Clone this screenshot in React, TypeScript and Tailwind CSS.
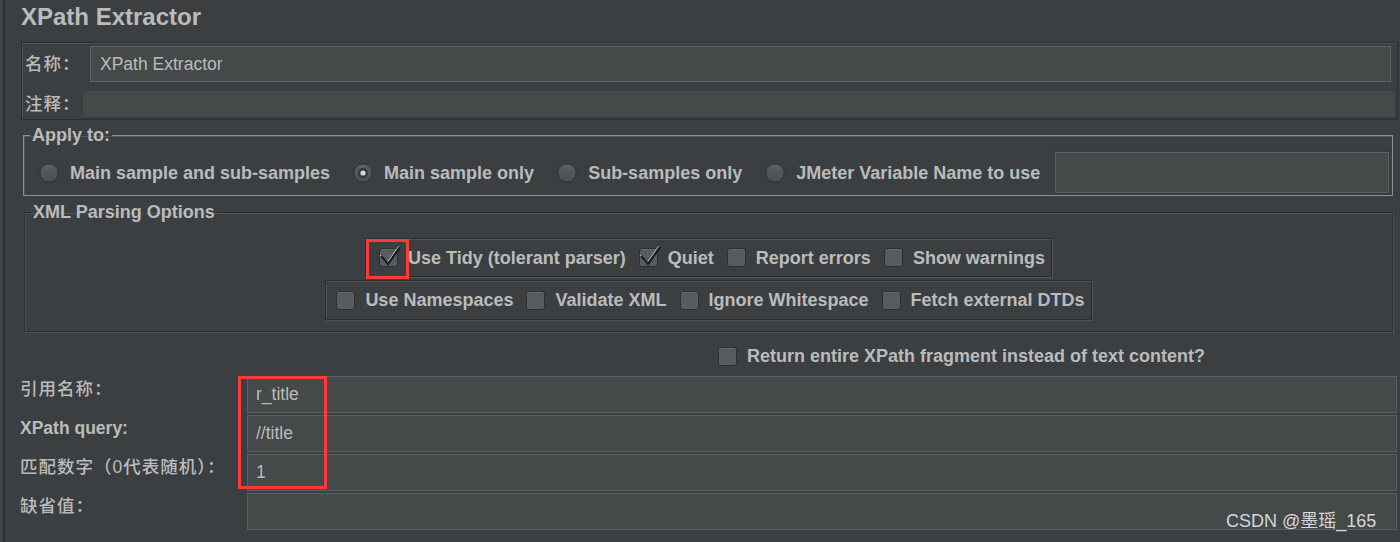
import React from 'react'

const sans = "font-['Liberation_Sans','Noto_Sans_CJK_SC',sans-serif]"

function Radio({ selected }: { selected?: boolean }) {
  return (
    <svg width="20" height="20" viewBox="0 0 20 20" className="shrink-0">
      <defs>
        <linearGradient id="rg" x1="0" y1="0" x2="0" y2="1">
          <stop offset="0" stopColor="#5e6163" />
          <stop offset="1" stopColor="#4a4d4f" />
        </linearGradient>
      </defs>
      <circle cx="10" cy="10" r="9.2" fill="url(#rg)" stroke="#2d2f31" />
      {selected && (
        <>
          <circle cx="10" cy="10" r="5" fill="#35383a" />
          <circle cx="10" cy="10" r="2.6" fill="#d8d8d8" />
        </>
      )}
    </svg>
  )
}

function Check({ checked }: { checked?: boolean }) {
  return (
    <span className="relative block w-[19px] h-[19px] shrink-0 rounded-[3px] border border-[#2d2f31] bg-[#595c5e] shadow-[inset_0_1px_0_#66696b]">
      {checked && (
        <svg className="absolute -left-[2px] -top-[6px]" width="24" height="24" viewBox="0 0 24 24">
          <path d="M3 13 L10 21 L22 4" fill="none" stroke="#d2d2d2" strokeWidth="1.4" transform="translate(-1,-0.6)" />
          <path d="M3 13 L10 21 L22 4" fill="none" stroke="#1b1b1b" strokeWidth="2.2" />
        </svg>
      )}
    </span>
  )
}

function Opt({ label, checked }: { label: string; checked?: boolean }) {
  return (
    <div className="flex items-center gap-[10px]">
      <Check checked={checked} />
      <span className="font-bold text-[18px] whitespace-nowrap">{label}</span>
    </div>
  )
}

function RadioOpt({ label, selected }: { label: string; selected?: boolean }) {
  return (
    <div className="flex items-center gap-[11px]">
      <Radio selected={selected} />
      <span className="font-bold text-[18px] whitespace-nowrap">{label}</span>
    </div>
  )
}

const fields = [
  { label: '引用名称：', value: 'r_title', bold: false },
  { label: 'XPath query:', value: '//title', bold: true },
  { label: '匹配数字（0代表随机）：', value: '1', bold: false },
  { label: '缺省值：', value: '', bold: false },
]

export default function App() {
  return (
    <div className={`w-[1400px] h-[542px] bg-[#3c3f41] flex overflow-hidden relative ${sans} text-[#bbbbbb] text-[17.5px] leading-[20px]`}>
      {/* left splitter edge */}
      <div className="w-[3px] shrink-0 bg-[#424547]" />
      <div className="w-[2px] shrink-0 bg-[#2e3032]" />

      <div className="flex-1 min-w-0 flex flex-col">
        {/* Header */}
        <h1 className="h-[42px] pl-[16px] pt-[4px] text-[24px] font-bold leading-[26px]">XPath Extractor</h1>

        {/* 名称 / 注释 */}
        <div className="ml-[16px] mr-[2px] h-[78px] border border-[#2c2e30] shadow-[inset_1px_1px_0_#4f5254] pl-[3px] pr-[1px] pt-[3px] flex flex-col">
          <div className="flex items-center h-[36px]">
            <span className="w-[65px] tracking-[1px] font-medium">名称：</span>
            <div className="flex-1 mr-[5px] h-full bg-[#45494a] border border-[#626567] shadow-[0_0_0_1px_#3a3d3f] flex items-center pl-[9px]">
              XPath Extractor
            </div>
          </div>
          <div className="flex items-center h-[28px] mt-[8px]">
            <span className="w-[57px] tracking-[1px] font-medium">注释：</span>
            <div className="flex-1 h-full bg-[#45494a] border border-[#393c3e]" />
          </div>
        </div>

        {/* Apply to */}
        <fieldset className="min-w-0 mt-[6px] ml-[18px] mr-[7px] border border-[#8d8f91] shadow-[inset_1px_1px_0_#54575a]">
          <legend className="ml-[6px] px-[2px] font-bold text-[18px] leading-[18px]">Apply to:</legend>
          <div className="flex items-center h-[41px] mt-[8px] mb-[2px] pl-[15px] pr-[3px] gap-[23px]">
            <RadioOpt label="Main sample and sub-samples" />
            <RadioOpt label="Main sample only" selected />
            <RadioOpt label="Sub-samples only" />
            <RadioOpt label="JMeter Variable Name to use" />
            <div className="flex-1 -ml-[8px] h-full bg-[#45494a] border border-[#5d6062] shadow-[0_0_0_1px_#36393b]" />
          </div>
        </fieldset>

        {/* XML Parsing Options */}
        <fieldset className="min-w-0 mt-[7px] ml-[19px] mr-[7px] border border-[#2c2e30] shadow-[inset_1px_1px_0_#4f5254,1px_1px_0_#4f5254]">
          <legend className="ml-[6px] px-[2px] font-bold text-[18px] leading-[18px]">XML Parsing Options</legend>
          <div className="flex flex-col items-center gap-[3px] mt-[17px] pb-[11px]">
            <div className="h-[39px] flex items-center gap-[13px] pl-[13px] pr-[6px] border border-[#2c2e30] shadow-[inset_1px_1px_0_#4f5254,1px_1px_0_#4f5254]">
              <Opt label="Use Tidy (tolerant parser)" checked />
              <Opt label="Quiet" checked />
              <Opt label="Report errors" />
              <Opt label="Show warnings" />
            </div>
            <div className="h-[40px] flex items-center gap-[13px] pl-[10px] pr-[6px] border border-[#2c2e30] shadow-[inset_1px_1px_0_#4f5254,1px_1px_0_#4f5254]">
              <Opt label="Use Namespaces" />
              <Opt label="Validate XML" />
              <Opt label="Ignore Whitespace" />
              <Opt label="Fetch external DTDs" />
            </div>
          </div>
        </fieldset>

        {/* Return fragment */}
        <div className="mt-[14px] h-[20px] flex items-center pl-[713px]">
          <Opt label="Return entire XPath fragment instead of text content?" />
        </div>

        {/* Fields */}
        <div className="mt-[10px] flex flex-col gap-[2px]">
          {fields.map((f) => (
            <div key={f.label} className="flex h-[37px]">
              <span className={`w-[242px] shrink-0 pl-[15px] pt-[3px] whitespace-nowrap ${f.bold ? 'font-bold' : 'tracking-[1px] font-medium'}`}>
                {f.label}
              </span>
              <div className="flex-1 mr-[3px] bg-[#45494a] border border-[#5b5e60] flex items-center pl-[8px] pb-[2px]">
                {f.value}
              </div>
            </div>
          ))}
        </div>
      </div>

      {/* red highlight boxes */}
      <div className="absolute left-[366px] top-[239px] w-[43px] h-[40px] border-[3px] border-[#fb3a3a]" />
      <div className="absolute left-[238px] top-[376px] w-[89px] h-[113px] border-[3px] border-[#fb3a3a]" />

      {/* watermark */}
      <div className="absolute left-[1226px] top-[509px] text-[18px] leading-[24px] text-[#d6d6d6] whitespace-nowrap">
        CSDN @墨瑶_165
      </div>
    </div>
  )
}
